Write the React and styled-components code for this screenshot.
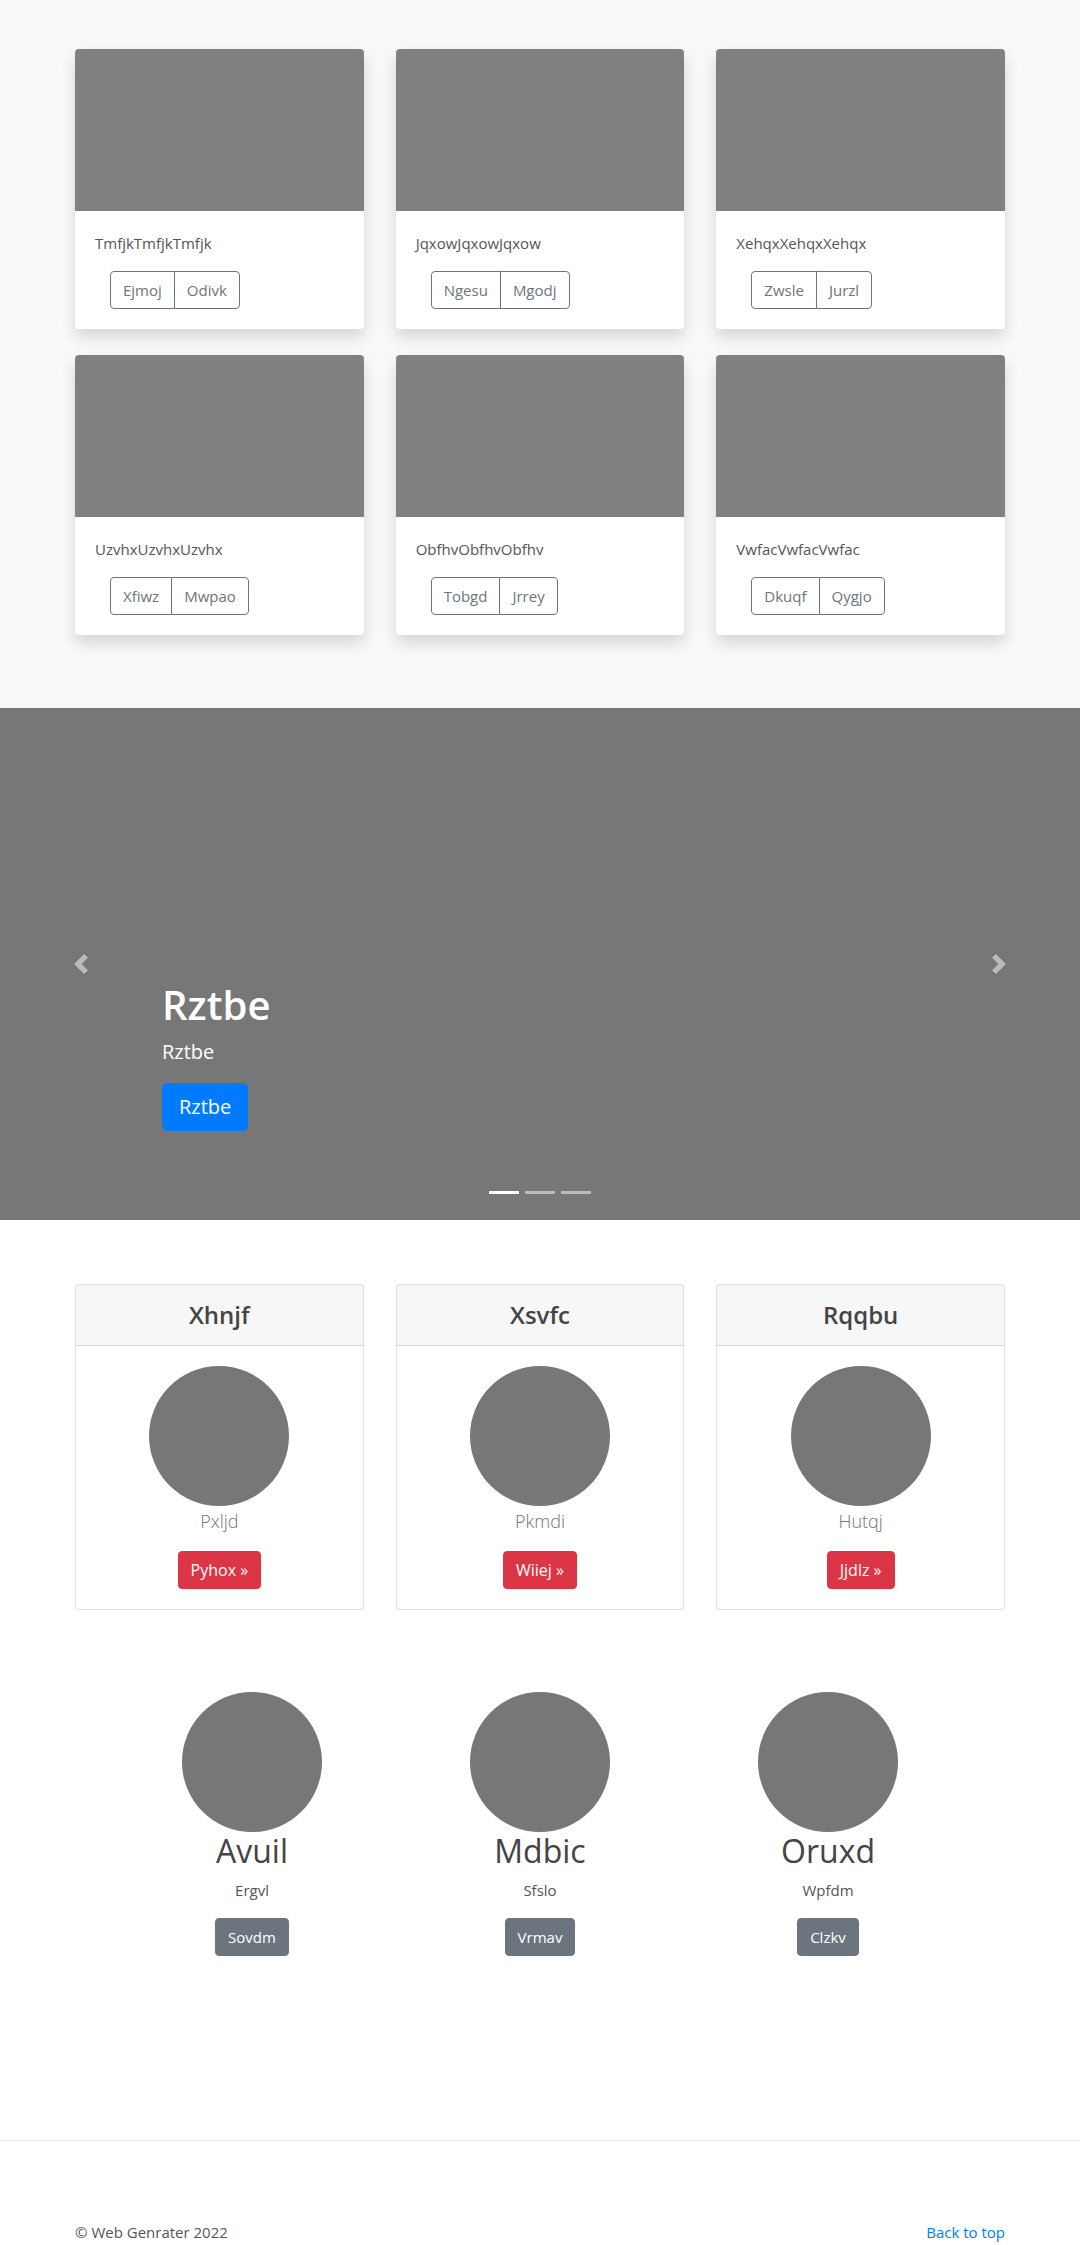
import React from 'react';
import styled, { createGlobalStyle } from 'styled-components';

const GlobalStyle = createGlobalStyle`
  * { box-sizing: border-box; }
  body {
    margin: 0;
    font-family: "Open Sans", "Noto Sans", Arial, sans-serif;
    font-size: 16px;
    line-height: 1.5;
    color: #212529;
    background: #fff;
  }
  h1, h2, h4, p { margin: 0; }
`;

const albums = [
  { title: 'TmfjkTmfjkTmfjk', actions: ['Ejmoj', 'Odivk'] },
  { title: 'JqxowJqxowJqxow', actions: ['Ngesu', 'Mgodj'] },
  { title: 'XehqxXehqxXehqx', actions: ['Zwsle', 'Jurzl'] },
  { title: 'UzvhxUzvhxUzvhx', actions: ['Xfiwz', 'Mwpao'] },
  { title: 'ObfhvObfhvObfhv', actions: ['Tobgd', 'Jrrey'] },
  { title: 'VwfacVwfacVwfac', actions: ['Dkuqf', 'Qygjo'] },
];

const plans = [
  { title: 'Xhnjf', name: 'Pxljd', cta: 'Pyhox' },
  { title: 'Xsvfc', name: 'Pkmdi', cta: 'Wiiej' },
  { title: 'Rqqbu', name: 'Hutqj', cta: 'Jjdlz' },
];

const features = [
  { title: 'Avuil', text: 'Ergvl', cta: 'Sovdm' },
  { title: 'Mdbic', text: 'Sfslo', cta: 'Vrmav' },
  { title: 'Oruxd', text: 'Wpfdm', cta: 'Clzkv' },
];

/* ---------- album ---------- */

const AlbumSection = styled.section`
  background: #f8f9fa;
  padding: 49px 0 73px;
`;

const CardGrid = styled.div`
  width: 930px;
  margin: 0 auto;
  display: grid;
  grid-template-columns: repeat(3, 1fr);
  column-gap: 32px;
  row-gap: 26px;
`;

const AlbumCard = styled.div`
  background: #fff;
  border-radius: 4px;
  overflow: hidden;
  box-shadow: 0 8px 16px rgba(0, 0, 0, 0.15);
`;

const Thumb = styled.div`
  height: 162px;
  background: #808080;
`;

const CardBody = styled.div`
  padding: 20px;
`;

const CardText = styled.p`
  font-size: 15px;
  line-height: 24px;
  color: #555;
  margin-bottom: 16px;
`;

const BtnGroup = styled.div`
  display: inline-flex;
  margin-left: 15px;
`;

const OutlineBtn = styled.button`
  font: inherit;
  font-size: 15px;
  line-height: 24px;
  padding: 6px 12px;
  color: #6c757d;
  background: transparent;
  border: 1px solid #6c757d;
  border-radius: 0;
  & + & { margin-left: -1px; }
  &:first-child { border-radius: 4px 0 0 4px; }
  &:last-child { border-radius: 0 4px 4px 0; }
`;

/* ---------- carousel ---------- */

const Carousel = styled.section`
  position: relative;
  height: 512px;
  background: #777;
  overflow: hidden;
`;

const Control = styled.a`
  position: absolute;
  top: 0;
  bottom: 0;
  ${(p) => (p.$side === 'left' ? 'left: 0;' : 'right: 0;')}
  width: 15%;
  display: flex;
  align-items: center;
  justify-content: center;
  opacity: 0.5;
`;

const Caption = styled.div`
  position: absolute;
  left: 15%;
  right: 15%;
  bottom: 48px;
  padding: 20px 0;
  color: #fff;
`;

const CaptionTitle = styled.h1`
  font-size: 40px;
  line-height: 48px;
  font-weight: 600;
  margin-bottom: 8px;
`;

const Lead = styled.p`
  font-size: 20px;
  line-height: 30px;
  margin-bottom: 16px;
`;

const PrimaryBtnLg = styled.button`
  font: inherit;
  font-size: 20px;
  line-height: 30px;
  padding: 8px 16px;
  color: #fff;
  background: #007bff;
  border: 1px solid #007bff;
  border-radius: 5px;
  margin-bottom: 21px;
`;

const Indicators = styled.ol`
  position: absolute;
  left: 0;
  right: 0;
  bottom: 0;
  margin: 0 0 16px;
  padding: 0;
  list-style: none;
  display: flex;
  justify-content: center;
`;

const Indicator = styled.li`
  width: 30px;
  height: 3px;
  margin: 10px 3px;
  background: #fff;
  opacity: ${(p) => (p.$active ? 1 : 0.5)};
`;

const Chevron = ({ dir }) => (
  <svg width="20" height="20" viewBox="0 0 8 8" fill="#fff">
    {dir === 'left' ? (
      <path d="M5.25 0l-4 4 4 4 1.5-1.5L4.25 4l2.5-2.5L5.25 0z" />
    ) : (
      <path d="M2.75 0l-1.5 1.5L3.75 4l-2.5 2.5L2.75 8l4-4-4-4z" />
    )}
  </svg>
);

/* ---------- pricing ---------- */

const PricingSection = styled.section`
  padding-top: 64px;
`;

const PriceCard = styled.div`
  border: 1px solid rgba(0, 0, 0, 0.125);
  border-radius: 4px;
  overflow: hidden;
  background: #fff;
`;

const PriceHeader = styled.div`
  padding: 12px 20px;
  background: rgba(0, 0, 0, 0.03);
  border-bottom: 1px solid rgba(0, 0, 0, 0.125);
  text-align: center;
`;

const PriceTitle = styled.h4`
  font-size: 24px;
  line-height: 36px;
  font-weight: 600;
  color: #444;
`;

const PriceBody = styled.div`
  padding: 20px;
  display: flex;
  flex-direction: column;
  align-items: center;
`;

const Avatar = styled.div`
  width: ${(p) => p.$size}px;
  height: ${(p) => p.$size}px;
  border-radius: 50%;
  background: #777;
  flex-shrink: 0;
`;

const MutedName = styled.p`
  font-size: 18px;
  line-height: 30px;
  font-weight: 300;
  color: #6c757d;
  margin-bottom: 15px;
`;

const SolidBtn = styled.button`
  font: inherit;
  font-size: ${(p) => (p.$small ? '15px' : '16px')};
  line-height: 24px;
  padding: 6px 12px;
  color: #fff;
  background: ${(p) => p.$color};
  border: 1px solid ${(p) => p.$color};
  border-radius: 4px;
`;

/* ---------- marketing ---------- */

const MarketingSection = styled.section`
  padding: 82px 0 184px;
`;

const MarketingRow = styled.div`
  width: 864px;
  margin: 0 auto;
  display: grid;
  grid-template-columns: repeat(3, 1fr);
`;

const Feature = styled.div`
  display: flex;
  flex-direction: column;
  align-items: center;
  text-align: center;
`;

const FeatureTitle = styled.h2`
  font-size: 32px;
  line-height: 38px;
  font-weight: 400;
  color: #444;
  margin-bottom: 8px;
`;

const FeatureText = styled.p`
  font-size: 15px;
  line-height: 24px;
  color: #555;
  margin-bottom: 16px;
`;

/* ---------- footer ---------- */

const Footer = styled.footer`
  border-top: 1px solid #e5e5e5;
  padding: 79px 0 3px;
`;

const FooterInner = styled.div`
  width: 930px;
  margin: 0 auto;
  display: flex;
  justify-content: space-between;
  font-size: 15px;
  line-height: 24px;
  color: #555;
`;

const TopLink = styled.a`
  color: #007bff;
  text-decoration: none;
`;

export default function App() {
  return (
    <>
      <GlobalStyle />
      <AlbumSection>
        <CardGrid>
          {albums.map((a) => (
            <AlbumCard key={a.title}>
              <Thumb />
              <CardBody>
                <CardText>{a.title}</CardText>
                <BtnGroup>
                  {a.actions.map((b) => (
                    <OutlineBtn key={b}>{b}</OutlineBtn>
                  ))}
                </BtnGroup>
              </CardBody>
            </AlbumCard>
          ))}
        </CardGrid>
      </AlbumSection>

      <Carousel>
        <Control $side="left" href="#">
          <Chevron dir="left" />
        </Control>
        <Control $side="right" href="#">
          <Chevron dir="right" />
        </Control>
        <Caption>
          <CaptionTitle>Rztbe</CaptionTitle>
          <Lead>Rztbe</Lead>
          <PrimaryBtnLg>Rztbe</PrimaryBtnLg>
        </Caption>
        <Indicators>
          <Indicator $active />
          <Indicator />
          <Indicator />
        </Indicators>
      </Carousel>

      <PricingSection>
        <CardGrid>
          {plans.map((p) => (
            <PriceCard key={p.title}>
              <PriceHeader>
                <PriceTitle>{p.title}</PriceTitle>
              </PriceHeader>
              <PriceBody>
                <Avatar $size={140} />
                <MutedName>{p.name}</MutedName>
                <SolidBtn $color="#dc3545">{p.cta} »</SolidBtn>
              </PriceBody>
            </PriceCard>
          ))}
        </CardGrid>
      </PricingSection>

      <MarketingSection>
        <MarketingRow>
          {features.map((f) => (
            <Feature key={f.title}>
              <Avatar $size={140} />
              <FeatureTitle>{f.title}</FeatureTitle>
              <FeatureText>{f.text}</FeatureText>
              <SolidBtn $color="#6c757d" $small>
                {f.cta}
              </SolidBtn>
            </Feature>
          ))}
        </MarketingRow>
      </MarketingSection>

      <Footer>
        <FooterInner>
          <span>© Web Genrater 2022</span>
          <TopLink href="#">Back to top</TopLink>
        </FooterInner>
      </Footer>
    </>
  );
}
